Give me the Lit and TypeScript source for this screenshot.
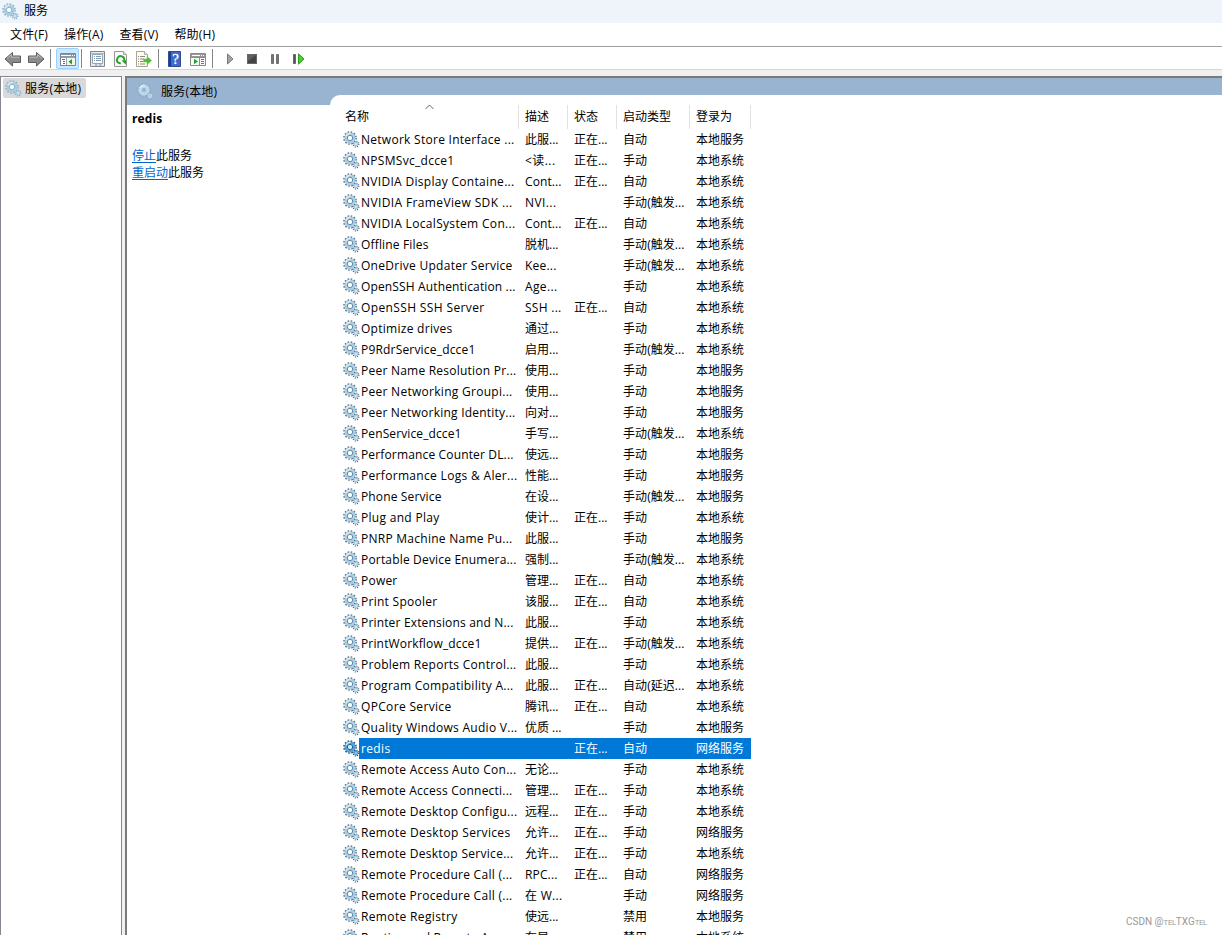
import { LitElement, html, css, svg, nothing } from "lit";
import { customElement, property } from "lit/decorators.js";

const FONT = '"Open Sans", "Noto Sans CJK SC", sans-serif';
const ctx = document.createElement("canvas").getContext("2d")!;

/** Letter spacing that makes `text` take `width` pixels. */
function spacing(text: string, width: number): string {
  ctx.font = `12px ${FONT}`;
  const n = text.length;
  return `letter-spacing:${((width - 0.5 - ctx.measureText(text).width) / n).toFixed(3)}px`;
}

type Row = [string, number, string, number, boolean, string, string];
const S = "本地系统", L = "本地服务", N = "网络服务";
const M = "手动", A = "自动", T = "手动(触发...";
const rows: Row[] = [
  ["Network Store Interface ...", 154, "此服...", 34, true, A, L],
  ["NPSMSvc_dcce1", 94, "<读...", 31, true, M, S],
  ["NVIDIA Display Containe...", 154, "Cont...", 37, true, A, S],
  ["NVIDIA FrameView SDK ...", 152, "NVI...", 32, false, T, S],
  ["NVIDIA LocalSystem Con...", 155, "Cont...", 37, true, A, S],
  ["Offline Files", 68, "脱机...", 34, false, T, S],
  ["OneDrive Updater Service", 152, "Kee...", 32, false, T, S],
  ["OpenSSH Authentication ...", 155, "Age...", 33, false, M, S],
  ["OpenSSH SSH Server", 124, "SSH ...", 37, true, A, S],
  ["Optimize drives", 92, "通过...", 34, false, M, S],
  ["P9RdrService_dcce1", 115, "启用...", 34, false, T, S],
  ["Peer Name Resolution Pr...", 156, "使用...", 34, false, M, L],
  ["Peer Networking Groupi...", 152, "使用...", 34, false, M, L],
  ["Peer Networking Identity...", 155, "向对...", 34, false, M, L],
  ["PenService_dcce1", 101, "手写...", 34, false, T, S],
  ["Performance Counter DL...", 153, "使远...", 34, false, M, L],
  ["Performance Logs & Aler...", 157, "性能...", 34, false, M, L],
  ["Phone Service", 81, "在设...", 34, false, T, L],
  ["Plug and Play", 79, "使计...", 34, true, M, S],
  ["PNRP Machine Name Pu...", 152, "此服...", 34, false, M, L],
  ["Portable Device Enumera...", 156, "强制...", 34, false, T, S],
  ["Power", 37, "管理...", 34, true, A, S],
  ["Print Spooler", 77, "该服...", 34, true, A, S],
  ["Printer Extensions and N...", 153, "此服...", 34, false, M, S],
  ["PrintWorkflow_dcce1", 121, "提供...", 34, true, T, S],
  ["Problem Reports Control...", 156, "此服...", 34, false, M, S],
  ["Program Compatibility A...", 153, "此服...", 34, true, "自动(延迟...", S],
  ["QPCore Service", 91, "腾讯...", 34, true, A, S],
  ["Quality Windows Audio V...", 157, "优质 ...", 37, false, M, L],
  ["redis", 30, "", 0, true, A, N],
  ["Remote Access Auto Con...", 156, "无论...", 34, false, M, S],
  ["Remote Access Connecti...", 152, "管理...", 34, true, M, S],
  ["Remote Desktop Configu...", 157, "远程...", 34, true, M, S],
  ["Remote Desktop Services", 150, "允许...", 34, true, M, N],
  ["Remote Desktop Service...", 153, "允许...", 34, true, M, S],
  ["Remote Procedure Call (...", 152, "RPC...", 33, true, A, N],
  ["Remote Procedure Call (...", 152, "在 W...", 38, false, M, N],
  ["Remote Registry", 97, "使远...", 34, false, "禁用", L],
  ["Routing and Remote A...", 138, "在局...", 34, false, "禁用", S],
];

@customElement("gear-icon")
class GearIcon extends LitElement {
  @property() variant = "";
  static styles = css`
    :host { display: block; width: 17px; height: 17px; flex: none; }
    svg { display: block; }
  `;
  render() {
    const v = this.variant;
    const sel = v === "selected", soft = v === "soft", pale = v === "pale";
    const teeth = sel ? "#124f80" : soft ? "#86aec4" : pale ? "#83a6c2" : "#4f6b80";
    const body = sel ? "#5b9fd0" : pale ? "#b9d8ec" : "#a9cce3";
    const rim = sel ? "#195f96" : soft ? "#89b2ca" : pale ? "#c4dfef" : "#6189a4";
    const core = sel ? "#d7ecfa" : pale ? "#99b4d1" : "#fff";
    return html`<svg width="17" height="17" viewBox="0 0 17 17">
      <circle cx="7" cy="7" r="6" fill="none" stroke=${teeth} stroke-width="1.6" stroke-dasharray="1.57 1.57"/>
      <circle cx="7" cy="7" r="4.3" fill="none" stroke=${body} stroke-width="2.8"/>
      <circle cx="7" cy="7" r="2.7" fill=${core} stroke=${rim} stroke-width="1"/>
      <path d="M3 5.2Q4.4 2.4 7.5 2.2" fill="none" stroke="#e5f4fc" stroke-width="1.1"/>
      <circle cx="13" cy="13" r="2.8" fill="none" stroke=${teeth} stroke-width="1.3" stroke-dasharray="1.1 1.1"/>
      <circle cx="13" cy="13" r="1.6" fill=${core} stroke=${body} stroke-width="1.6"/>
    </svg>`;
  }
}

const icons = {
  back: svg`<path d="M1 8 8.5 1.5V5H16.5V11.5H8.5V15Z" fill="#8b8b8b" stroke="#5d5d5d"/><path d="M3 7.5 7.5 3.5V6.2H15.5" fill="none" stroke="#bbb"/>`,
  forward: svg`<path d="M17 8 9.5 1.5V5H1.5V11.5H9.5V15Z" fill="#8b8b8b" stroke="#5d5d5d"/><path d="M2.5 6.2H10.5V3.5L15 7.5" fill="none" stroke="#bbb"/>`,
  tree: svg`<path d="M1.5 2.5h15v12h-15z" fill="#fff" stroke="#7b8592"/><path d="M2 3h14v3H2z" fill="#8c97a4"/><path d="M2 4.5h10M13 4.5h1M15 4.5h1" stroke="#fff"/><path d="M2 6.5h14M7.5 7v7" stroke="#9aa3ad"/><path d="M3 8.5h3M4 10.5h2M4 12.5h2" stroke="#2e80c0"/><path d="M8 7h8v7H8z" fill="#f4f5f1"/><path d="M13 8v5.4L9.5 10.7z" fill="#1ba51b"/>`,
  props: svg`<path d="M1.5.5h14v15h-14z" fill="#e6eaee" stroke="#7f8790"/><path d="M2 2.5h13" stroke="#aeb8c2"/><path d="M3.5 3.5h10v9h-10z" fill="#fff" stroke="#98a4af"/><path d="M5 5.5h1M7 5.5h5M5 7.5h1M7 7.5h5M5 9.5h1M7 9.5h5" stroke="#7f9cb8"/><path d="M6 14h2.5M10 14h2.5" stroke="#7b91a5"/>`,
  refresh: svg`<path d="M1.5.5h9l3 3v12h-12z" fill="#fafafa" stroke="#969696"/><path d="M10.5.5v3h3" fill="#ddd" stroke="#aaa"/><path d="M5.8 12A3.7 3.7 0 1 1 11.3 9.6" fill="none" stroke="#29a329" stroke-width="1.9"/><path d="M8.5 9.2h5L12.7 13.8z" fill="#29a329"/><path d="M5.2 11.6l2.6 1" stroke="#29a329" stroke-width="1.8"/>`,
  exp: svg`<path d="M1.5.5h8l3 3v12h-11z" fill="#fffbe6" stroke="#aaa38d"/><path d="M9.5.5v3h3" fill="#eee" stroke="#aaa"/><path d="M3 5.5h1M5 5.5h5M3 8h1M5 8h4M3 10.5h1M5 10.5h4M3 13h1M5 13h5" stroke="#8b8892"/><path d="M8.5 8h3.5V5.2l4.7 4.3-4.7 4.3V11H8.5z" fill="#4cbd36" stroke="#79d368" stroke-width=".6"/>`,
  help: svg`<path d="M1.5.5h12v15h-12z" fill="#4169c8" stroke="#314a94"/><path d="M2 1h2v14H2z" fill="#183c94"/><text x="8.7" y="13" text-anchor="middle" font-family="Liberation Serif" font-size="15" fill="#fff" stroke="#fff" stroke-width=".3">?</text>`,
  win: svg`<path d="M1.5 2.5h15v12h-15z" fill="#fafafa" stroke="#8b8b8b"/><path d="M2 3h14v3H2z" fill="#989898"/><path d="M3 4.5h8M12 4.5h1M14 4.5h1" stroke="#fff"/><path d="M2 6.5h14M10.5 7v7" stroke="#8b8b8b"/><path d="M12 8.5h3M12 10.5h3M12 12.5h3" stroke="#3b81c3"/><path d="M5 7.8v5.5l4-2.8z" fill="#20a520"/>`,
  play: svg`<path d="M2.5 3v10l5.5-5z" fill="#a5a5a5" stroke="#787878"/>`,
  stop: svg`<rect x="1.5" y="3.5" width="9" height="9" fill="#454545" stroke="#676767"/><path d="M2 4h8l-8 6z" fill="#606060"/>`,
  pause: svg`<path d="M2.5 3.5h2v9h-2zM7.5 3.5h2v9h-2z" fill="#777" stroke="#707070"/>`,
  restart: svg`<path d="M1.5 3.5h2v9h-2z" fill="#555" stroke="#666"/><path d="M6.5 2.8v10.4l5.5-5.2z" fill="#4dcc2b" stroke="#2c9f20"/>`,
};

@customElement("tool-bar")
class ToolBar extends LitElement {
  static styles = css`
    :host {
      display: grid; height: 22px; padding-left: 4px; background: #fff; align-items: center;
      grid-template-columns: 23px 23px 6px 25px 8px 24px 22px 23px 9px 22px 23px 13px 21px 23px 23px 20px;
      border-top: 1px solid #a0a0a0; border-bottom: 1px solid #d6d6d6;
    }
    svg { display: block; margin-top: 2px; }
    .sep { width: 1px; height: 19px; margin-top: 1px; background: #858585; }
    .on { box-sizing: border-box; width: 23px; height: 21px; padding: 0 2px; background: #cce8ff; border: 1px solid #99d1ff; border-radius: 2px; }
  `;
  render() {
    const i = (k: keyof typeof icons) => html`<svg width="18" height="16" viewBox="0 0 18 16">${icons[k]}</svg>`;
    const sep = html`<div class="sep"></div>`;
    return html`${i("back")}${i("forward")}${sep}<div class="on">${i("tree")}</div>${sep}${i("props")}${i("refresh")}${i("exp")}${sep}${i("help")}${i("win")}${sep}${i("play")}${i("stop")}${i("pause")}${i("restart")}`;
  }
}

@customElement("service-list")
class ServiceList extends LitElement {
  static styles = css`
    :host { display: block; width: 411px; }
    .head, .row { display: grid; }
    .head { grid-template-columns: 179px 49px 49px 73px 61px; height: 24px; margin-top: 10px; line-height: 24px; }
    .head > div { border-right: 1px solid #e2e2e2; padding-left: 6px; position: relative; }
    .head > div:first-child { padding-left: 5px; }
    .arrow { position: absolute; left: 85px; top: -1px; }
    .row { grid-template-columns: 19px 160px 49px 49px 73px 61px; height: 21px; line-height: 21px; white-space: pre; }
    .icon { padding: 2px 0 0 3px; }
    .c { padding-left: 6px; }
    .name { padding-left: 2px; }
    .bar { display: grid; grid-column: 2 / -1; grid-template-columns: subgrid; }
    .selected .bar { background: #0078d7; color: #fff; }
  `;
  render() {
    const t = (s: string, w: number) => html`<span style=${spacing(s, w)}>${s}</span>`;
    return html`
      <div class="head">
        <div>名称<svg class="arrow" width="9" height="6" viewBox="0 0 9 6"><path d="M.5 5 4.5 1l4 4" fill="none" stroke="#666"/></svg></div>
        <div>描述</div><div>状态</div><div>启动类型</div><div>登录为</div>
      </div>
      ${rows.map(([name, w, desc, dw, on, start, user]) => html`
        <div class="row ${name === "redis" ? "selected" : ""}">
          <div class="icon"><gear-icon variant=${name === "redis" ? "selected" : ""}></gear-icon></div>
          <div class="bar">
            <div class="name">${t(name, w)}</div>
            <div class="c">${desc ? t(desc, dw) : nothing}</div>
            <div class="c">${on ? t("正在...", 34) : nothing}</div>
            <div class="c">${start.length > 2 ? t(start, 62) : start}</div>
            <div class="c">${user}</div>
          </div>
        </div>`)}
    `;
  }
}

@customElement("app-root")
class AppRoot extends LitElement {
  static styles = css`
    :host {
      display: flex; flex-direction: column; width: 1222px; height: 935px; overflow: hidden; position: relative;
      background: #f0f0f0; color: #000; font: 12px "Open Sans", "Noto Sans CJK SC", sans-serif;
    }
    .title { display: flex; height: 23px; line-height: 22px; background: #eff4fb; gap: 5px; padding-left: 2px; flex: none; }
    .title gear-icon { margin-top: 3px; }
    .menu { display: flex; height: 23px; line-height: 23px; background: #fff; flex: none; gap: 16px; padding-left: 10px; }
    .menu span { letter-spacing: 0.15px; }
    .panes { display: flex; flex: 1; min-height: 0; padding-top: 6px; gap: 3px; }
    .tree { box-sizing: border-box; width: 122px; border: 1px solid #828790; border-bottom: 0; background: #fff; padding: 1px 0 0 2px; flex: none; }
    .node { display: flex; align-items: center; width: 82px; height: 20px; line-height: 19px; gap: 3px; padding-left: 1px; background: #d9d9d9; border-radius: 2px; }
    .node span, .caption span { letter-spacing: 0.2px; }
    .node gear-icon { margin-left: 1px; }
    .main { flex: 1; display: flex; border-left: 2px solid #696969; border-top: 2px solid #696969; background: #99b4d1; overflow: hidden; }
    .main { border-left-color: #7a7a7a; border-top-color: #7a7a7a; }
    .detail { width: 203px; flex: none; display: flex; flex-direction: column; }
    .caption { display: flex; height: 27px; line-height: 27px; padding-left: 10px; gap: 7px; flex: none; }
    .caption gear-icon { margin-top: 5px; }
    .info { flex: 1; background: #fff; padding: 5px 0 0 5px; line-height: 17px; }
    .info b { display: block; margin-bottom: 20px; letter-spacing: 0.1px; }
    .info a { color: #0066cc; text-decoration: underline; text-underline-offset: 2px; }
    .sheet { flex: 1; margin-top: 17px; background: #fff; border-top-left-radius: 10px; padding-left: 10px; }
    .mark { position: absolute; left: 1126px; top: 914px; font: 10px/15px Roboto, sans-serif; color: #999; white-space: nowrap; }
    .mark small { font-size: 7.7px; letter-spacing: -0.3px; }
  `;
  render() {
    return html`
      <div class="title"><gear-icon variant="soft"></gear-icon><span>服务</span></div>
      <div class="menu"><span>文件(F)</span><span>操作(A)</span><span>查看(V)</span><span>帮助(H)</span></div>
      <tool-bar></tool-bar>
      <div class="panes">
        <div class="tree"><div class="node"><gear-icon variant="soft"></gear-icon><span>服务(本地)</span></div></div>
        <div class="main">
          <div class="detail">
            <div class="caption"><gear-icon variant="pale"></gear-icon><span>服务(本地)</span></div>
            <div class="info"><b>redis</b><div><a>停止</a>此服务</div><div><a>重启动</a>此服务</div></div>
          </div>
          <div class="sheet"><service-list></service-list></div>
        </div>
      </div>
      <div class="mark">CSDN @<small>TEL</small>TXG<small>TEL</small></div>
    `;
  }
}
